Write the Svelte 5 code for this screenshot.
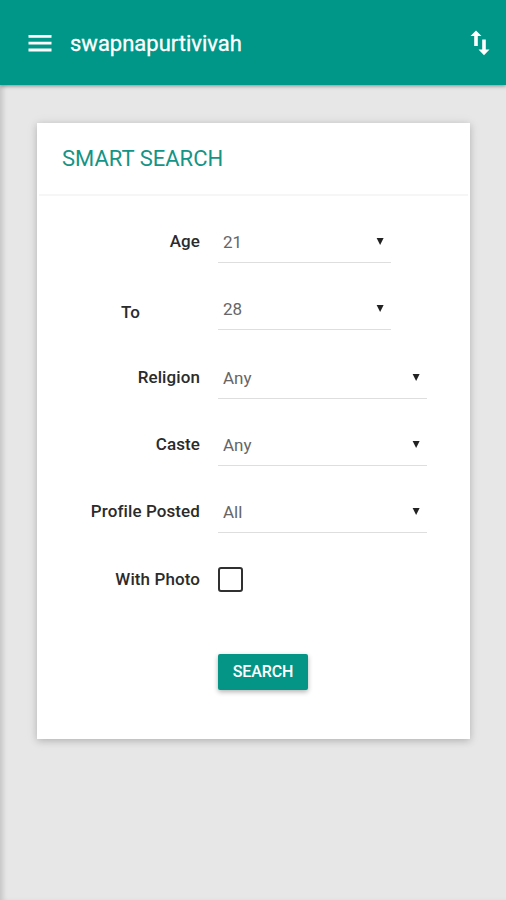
<script lang="ts">
  interface Field {
    id: string;
    label: string;
    options: string[];
    value: string;
    short?: boolean;
    inset?: boolean;
  }

  let fields = $state<Field[]>([
    { id: 'age-from', label: 'Age', options: ['18', '21', '25'], value: '21', short: true },
    { id: 'age-to', label: 'To', options: ['25', '28', '35'], value: '28', short: true, inset: true },
    { id: 'religion', label: 'Religion', options: ['Any'], value: 'Any' },
    { id: 'caste', label: 'Caste', options: ['Any'], value: 'Any' },
    { id: 'posted', label: 'Profile Posted', options: ['All'], value: 'All' },
  ]);
  let withPhoto = $state(false);
</script>

<div class="page">
  <header>
    <button type="button" class="icon-btn" aria-label="Menu">
      <svg width="24" height="17" viewBox="0 0 24 17" fill="currentColor">
        <path d="M0.5 0h23v2.8h-23zM0.5 6.8h23v2.8h-23zM0.5 13.6h23v2.8h-23z" />
      </svg>
    </button>
    <h1>swapnapurtivivah</h1>
    <button type="button" class="icon-btn swap" aria-label="Sort">
      <svg width="20" height="26" viewBox="0 0 20 26" fill="currentColor">
        <path d="M6 0.5 11.5 6H7.8v10H4.2V6H0.5zM14 25.2 8.5 19.5h3.7V9.5h3.6v10h3.7z" />
      </svg>
    </button>
  </header>

  <main>
    <section class="card">
      <h2>SMART SEARCH</h2>
      <form onsubmit={(e) => e.preventDefault()}>
        {#each fields as field (field.id)}
          <div class="row">
            <label for={field.id} class:inset={field.inset}>{field.label}</label>
            <div class="select" class:short={field.short}>
              <select id={field.id} bind:value={field.value}>
                {#each field.options as option}
                  <option value={option}>{option}</option>
                {/each}
              </select>
              <svg class="caret" width="8" height="7" viewBox="0 0 8 7"><path d="M0.6 0h7L4.1 7z" /></svg>
            </div>
          </div>
        {/each}
        <div class="row check">
          <label for="photo">With Photo</label>
          <input id="photo" type="checkbox" bind:checked={withPhoto} />
        </div>
        <button type="submit" class="search">SEARCH</button>
      </form>
    </section>
  </main>
</div>

<style>
  :global(body) {
    margin: 0;
    background: #e7e7e7;
  }
  .page {
    display: flex;
    flex-direction: column;
    height: 900px;
    font-family: Roboto, "Liberation Sans", sans-serif;
    background: #e7e7e7;
    overflow: hidden;
  }
  header {
    display: flex;
    align-items: center;
    flex: none;
    box-sizing: border-box;
    height: 85px;
    padding: 2px 16px 0 28px;
    color: #fff;
    background: #009788;
    box-shadow: 0 1px 4px rgba(0, 0, 0, 0.4);
    z-index: 1;
  }
  .icon-btn {
    padding: 0;
    border: 0;
    color: inherit;
    background: none;
  }
  .icon-btn svg { display: block; }
  h1 {
    flex: 1;
    margin: 1px 0 0 18px;
    font-size: 22px;
    font-weight: 400;
    line-height: 30px;
    -webkit-text-stroke: 0.3px #fff;
  }
  .swap { margin-top: -2px; }
  main {
    flex: 1;
    padding: 38px 36px 0 37px;
    box-shadow: inset 5px 0 5px -2px rgba(0, 0, 0, 0.14);
  }
  .card {
    box-sizing: border-box;
    height: 616px;
    background: #fff;
    box-shadow: 0 2px 7px rgba(0, 0, 0, 0.17), 0 1px 12px rgba(0, 0, 0, 0.08);
  }
  h2 {
    box-sizing: border-box;
    height: 73px;
    margin: 0 2px;
    padding-left: 23px;
    border-bottom: 2px solid #f6f6f6;
    color: #159485;
    font-size: 22px;
    font-weight: 400;
    line-height: 72px;
  }
  form { padding-top: 24px; }
  .row {
    display: grid;
    grid-template-columns: 163px auto;
    column-gap: 18px;
    justify-content: start;
    height: 44px;
    margin-bottom: 23px;
  }
  .row:nth-child(2) { margin-bottom: 25px; }
  label {
    color: #2b2b2b;
    font-size: 17px;
    font-weight: 500;
    line-height: 42px;
    letter-spacing: 0.1px;
    text-align: right;
  }
  .inset {
    padding: 4px 60px 0 0;
  }
  .select {
    display: flex;
    align-items: center;
    box-sizing: border-box;
    width: 209px;
    height: 43px;
    padding-right: 7px;
    border-bottom: 1.5px solid #dedede;
  }
  .short { width: 173px; }
  select {
    flex: 1;
    height: 42px;
    padding: 1px 0 0 5px;
    border: 0;
    outline: 0;
    appearance: none;
    color: #666;
    background: none;
    font: 17px Roboto, "Liberation Sans", sans-serif;
  }
  .caret {
    flex: none;
    fill: #222;
  }
  .check {
    align-items: center;
    height: 25px;
    margin: 33px 0 0;
  }
  .check label { line-height: 25px; }
  .check input {
    box-sizing: border-box;
    width: 25px;
    height: 25px;
    margin: 0;
    border: 2px solid #303030;
    border-radius: 3px;
    appearance: none;
  }
  .check input:checked { background: #009788; }
  .search {
    display: block;
    width: 90px;
    height: 36px;
    margin: 62px 0 0 181px;
    padding: 0 0 1px;
    border: 0;
    border-radius: 2px;
    color: #fff;
    background: #059586;
    box-shadow: 0 2px 5px rgba(0, 0, 0, 0.3);
    font: 500 16px Roboto, "Liberation Sans", sans-serif;
    letter-spacing: -0.1px;
  }
</style>
